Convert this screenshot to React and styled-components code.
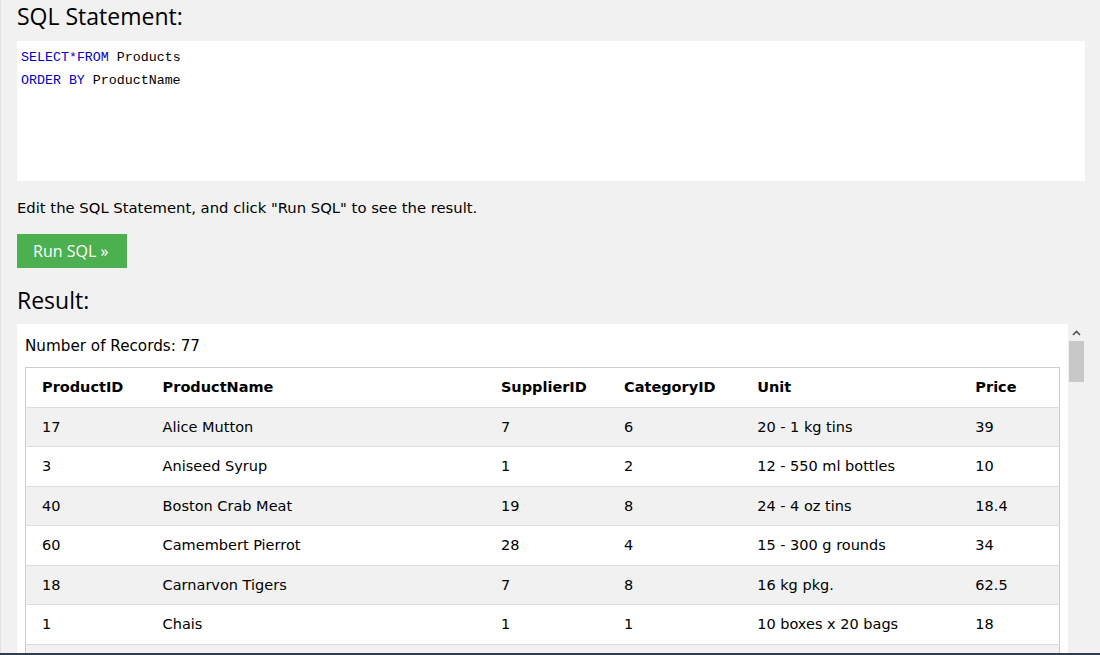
import React from "react";
import styled, { createGlobalStyle } from "styled-components";

const products = [
  { id: 17, name: "Alice Mutton", supplier: 7, category: 6, unit: "20 - 1 kg tins", price: "39" },
  { id: 3, name: "Aniseed Syrup", supplier: 1, category: 2, unit: "12 - 550 ml bottles", price: "10" },
  { id: 40, name: "Boston Crab Meat", supplier: 19, category: 8, unit: "24 - 4 oz tins", price: "18.4" },
  { id: 60, name: "Camembert Pierrot", supplier: 28, category: 4, unit: "15 - 300 g rounds", price: "34" },
  { id: 18, name: "Carnarvon Tigers", supplier: 7, category: 8, unit: "16 kg pkg.", price: "62.5" },
  { id: 1, name: "Chais", supplier: 1, category: 1, unit: "10 boxes x 20 bags", price: "18" },
];

const columns = [
  { key: "id", label: "ProductID", width: 129 },
  { key: "name", label: "ProductName", width: 338 },
  { key: "supplier", label: "SupplierID", width: 123 },
  { key: "category", label: "CategoryID", width: 133 },
  { key: "unit", label: "Unit", width: 218 },
  { key: "price", label: "Price", width: 92 },
];

function App() {
  return (
    <>
      <GlobalStyle />
      <Page>
        <Heading>SQL Statement:</Heading>
        <CodeBox>
          <CodeLine>
            <Keyword>SELECT</Keyword>
            <Keyword>*</Keyword>
            <Keyword>FROM</Keyword> Products
          </CodeLine>
          <CodeLine>
            <Keyword>ORDER BY</Keyword> ProductName
          </CodeLine>
        </CodeBox>
        <Hint>Edit the SQL Statement, and click "Run SQL" to see the result.</Hint>
        <RunButton>Run SQL »</RunButton>
        <Heading $result>Result:</Heading>
        <ResultPanel>
          <ResultScroll>
            <Count>Number of Records: 77</Count>
            <Table>
              <colgroup>
                {columns.map((c) => (
                  <Col key={c.key} $width={c.width} />
                ))}
              </colgroup>
              <thead>
                <tr>
                  {columns.map((c) => (
                    <Th key={c.key}>{c.label}</Th>
                  ))}
                </tr>
              </thead>
              <tbody>
                {products.map((p, i) => (
                  <Row key={p.id} $striped={i % 2 === 0}>
                    {columns.map((c) => (
                      <Td key={c.key}>{p[c.key]}</Td>
                    ))}
                  </Row>
                ))}
                <Row $striped>
                  <Td colSpan={6}>&nbsp;</Td>
                </Row>
              </tbody>
            </Table>
          </ResultScroll>
          <ScrollRail>
            <ArrowUp>
              <svg width="9" height="6" viewBox="0 0 9 6">
                <path d="M1 5 L4.5 1.5 L8 5" fill="none" stroke="#505050" strokeWidth="1.6" />
              </svg>
            </ArrowUp>
            <Thumb />
          </ScrollRail>
        </ResultPanel>
      </Page>
      <BottomEdge />
    </>
  );
}

var GlobalStyle = createGlobalStyle`
    html, body {
      margin: 0;
      padding: 0;
      height: 100%;
      overflow: hidden;
      background: #f1f1f1;
    }
    body {
      font-family: "DejaVu Sans", Verdana, sans-serif;
      color: #000;
    }
  `,
  Page = styled.div`
    height: 655px;
    box-sizing: border-box;
    border-left: 1px solid #e2e2e2;
    padding: 0 15px 0 16px;
    display: flex;
    flex-direction: column;
  `,
  Heading = styled.h3`
    margin: 0;
    height: ${(p) => (p.$result ? "39px" : "41px")};
    padding-top: ${(p) => (p.$result ? "0" : "1px")};
    box-sizing: border-box;
    font-family: "Open Sans", "Noto Sans", sans-serif;
    font-weight: 400;
    font-size: 23px;
    line-height: 30px;
  `,
  CodeBox = styled.div`
    background: #fff;
    height: 140px;
    box-sizing: border-box;
    padding: 5px 4px;
    font-family: "Liberation Mono", monospace;
    font-size: 13.3px;
    line-height: 23px;
  `,
  CodeLine = styled.div`
    white-space: pre;
  `,
  Keyword = styled.span`
    color: mediumblue;
  `,
  Hint = styled.p`
    margin: 0;
    padding-top: 17px;
    height: 53px;
    box-sizing: border-box;
    font-size: 14.8px;
    line-height: 20px;
  `,
  RunButton = styled.button`
    align-self: flex-start;
    width: 110px;
    height: 34px;
    border: none;
    background: #4caf50;
    color: #fff;
    font-family: "Open Sans", "Noto Sans", sans-serif;
    font-size: 16px;
    padding: 0 16px;
    text-align: left;
    margin-bottom: 17px;
    cursor: pointer;
  `,
  ResultPanel = styled.div`
    flex: 1;
    display: flex;
    min-height: 0;
  `,
  ResultScroll = styled.div`
    flex: 1;
    background: #fff;
    padding: 0 8px;
    overflow: hidden;
    font-size: 14.5px;
  `,
  Count = styled.p`
    margin: 0;
    padding: 12px 0 11px;
    line-height: 20px;
    font-size: 15.2px;
  `,
  Table = styled.table`
    border-collapse: collapse;
    table-layout: fixed;
    width: 1035px;
    border: 1px solid #ccc;
  `,
  Col = styled.col`
    width: ${(p) => p.$width}px;
  `,
  Th = styled.th`
    text-align: left;
    font-weight: 700;
    padding: 8px;
    line-height: 22.5px;
    border-bottom: 1px solid #ddd;
    &:first-child {
      padding-left: 16px;
    }
  `,
  Row = styled.tr`
    background: ${(p) => (p.$striped ? "#f1f1f1" : "#fff")};
    border-bottom: 1px solid #ddd;
  `,
  Td = styled.td`
    padding: 8px;
    line-height: 22.5px;
    white-space: nowrap;
    &:first-child {
      padding-left: 16px;
    }
  `,
  ScrollRail = styled.div`
    width: 17px;
    background: #f1f1f1;
    display: flex;
    flex-direction: column;
    align-items: center;
  `,
  ArrowUp = styled.div`
    height: 17px;
    display: flex;
    align-items: center;
    justify-content: center;
  `,
  Thumb = styled.div`
    width: 15px;
    height: 41px;
    background: #c8c8c8;
  `,
  BottomEdge = styled.div`
    position: fixed;
    left: 0;
    right: 0;
    bottom: 0;
    height: 2px;
    background: #2f3f4f;
  `;

export default App;
